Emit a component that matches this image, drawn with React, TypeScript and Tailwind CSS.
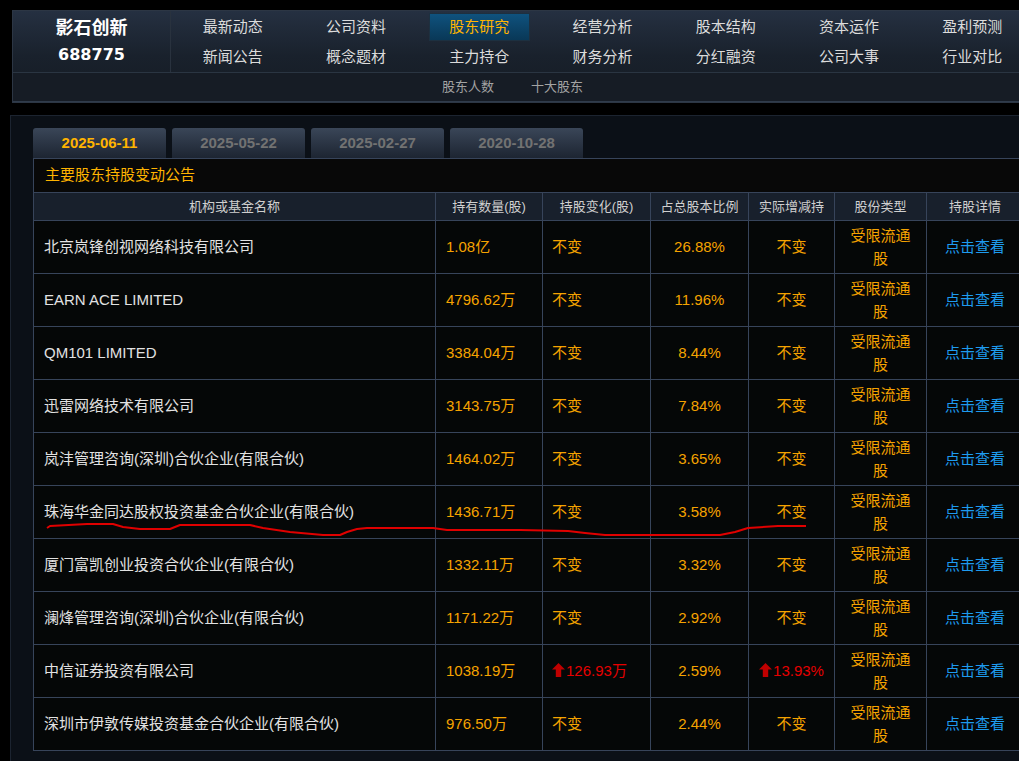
import React from 'react';

type Row = {
  name: string;
  count: string;
  change: string;
  pct: string;
  actual: string;
  up?: boolean;
};

const rows: Row[] = [
  { name: '北京岚锋创视网络科技有限公司', count: '1.08亿', change: '不变', pct: '26.88%', actual: '不变' },
  { name: 'EARN ACE LIMITED', count: '4796.62万', change: '不变', pct: '11.96%', actual: '不变' },
  { name: 'QM101 LIMITED', count: '3384.04万', change: '不变', pct: '8.44%', actual: '不变' },
  { name: '迅雷网络技术有限公司', count: '3143.75万', change: '不变', pct: '7.84%', actual: '不变' },
  { name: '岚沣管理咨询(深圳)合伙企业(有限合伙)', count: '1464.02万', change: '不变', pct: '3.65%', actual: '不变' },
  { name: '珠海华金同达股权投资基金合伙企业(有限合伙)', count: '1436.71万', change: '不变', pct: '3.58%', actual: '不变' },
  { name: '厦门富凯创业投资合伙企业(有限合伙)', count: '1332.11万', change: '不变', pct: '3.32%', actual: '不变' },
  { name: '澜烽管理咨询(深圳)合伙企业(有限合伙)', count: '1171.22万', change: '不变', pct: '2.92%', actual: '不变' },
  { name: '中信证券投资有限公司', count: '1038.19万', change: '126.93万', pct: '2.59%', actual: '13.93%', up: true },
  { name: '深圳市伊敦传媒投资基金合伙企业(有限合伙)', count: '976.50万', change: '不变', pct: '2.44%', actual: '不变' },
];

const navTop = ['最新动态', '公司资料', '股东研究', '经营分析', '股本结构', '资本运作', '盈利预测'];
const navBottom = ['新闻公告', '概念题材', '主力持仓', '财务分析', '分红融资', '公司大事', '行业对比'];
const tabs = ['2025-06-11', '2025-05-22', '2025-02-27', '2020-10-28'];

function UpArrow() {
  return (
    <svg width="13" height="14" viewBox="0 0 13 14" className="inline-block mr-[1px] -mt-[3px] align-middle">
      <polygon points="6.5,0 13,6.5 9.2,6.5 9.2,14 3.8,14 3.8,6.5 0,6.5" fill="#c00000" />
    </svg>
  );
}

export default function App() {
  return (
    <div className="relative w-[1019px] h-[761px] overflow-hidden bg-black font-['Liberation_Sans','Noto_Sans_CJK_SC',sans-serif]">
      {/* Header */}
      <div className="ml-[12px] mt-[10px] w-[1030px] h-[93px] border border-[#2c3644] bg-gradient-to-b from-[#253041] via-[#19212c] to-[#151b23]">
        <div className="flex h-[61px]">
          <div className="w-[158px] shrink-0 border-r border-[#29323e] flex flex-col items-center pt-[4px]">
            <div className="text-[18px] leading-[26px] font-bold text-white">影石创新</div>
            <div className="text-[16px] leading-[28px] font-bold text-white font-['DejaVu_Sans',sans-serif]">688775</div>
          </div>
          <div className="w-[863px] grid grid-cols-7 grid-rows-2 pt-[2px] gap-y-[1px] text-[15px] text-[#dcdcdc]">
            {navTop.map((t) => (
              <div key={t} className="h-[28px] flex items-center justify-center">
                {t === '股东研究' ? (
                  <span className="w-[101px] h-[28px] flex items-center justify-center border border-[#1d3040] bg-gradient-to-b from-[#0f527e] to-[#093857] text-[#ffb400]">
                    {t}
                  </span>
                ) : (
                  t
                )}
              </div>
            ))}
            {navBottom.map((t) => (
              <div key={t} className="h-[28px] flex items-center justify-center">
                {t}
              </div>
            ))}
          </div>
        </div>
        <div className="h-[30px] border-t border-[#2a3542] border-b border-b-[#2f3b4b] bg-[#161c25] flex items-center pl-[429px] gap-[37px] text-[13px] text-[#a3a3a3]">
          <span>股东人数</span>
          <span>十大股东</span>
        </div>
      </div>

      {/* Main panel */}
      <div className="ml-[10px] mt-[12px] w-[1020px] h-[700px] bg-[#0b1017] border-l border-t border-[#1c2430] pl-[22px] pt-[12px]">
        <div className="flex gap-[6px]">
          {tabs.map((t, i) => (
            <div
              key={t}
              className={
                'w-[133px] h-[30px] rounded-t-[3px] bg-gradient-to-b from-[#3a4658] to-[#1d2532] flex items-center justify-center text-[15px] font-bold ' +
                (i === 0 ? 'text-[#ffb400]' : 'text-[#727272]')
              }
            >
              {t}
            </div>
          ))}
        </div>

        <div className="w-[990px] border-l border-[#37445a]">
          <div className="h-[34px] border-t border-[#37445a] bg-[#080808] flex items-center pl-[11px] text-[15px] text-[#ffb400]">
            主要股东持股变动公告
          </div>
          <table className="table-fixed border-collapse w-[990px] -ml-px">
            <colgroup>
              <col className="w-[402px]" />
              <col className="w-[107px]" />
              <col className="w-[108px]" />
              <col className="w-[98px]" />
              <col className="w-[86px]" />
              <col className="w-[92px]" />
              <col className="w-[97px]" />
            </colgroup>
            <thead>
              <tr className="h-[28px] bg-[#18202c] text-[13px] text-[#cfcfcf]">
                {['机构或基金名称', '持有数量(股)', '持股变化(股)', '占总股本比例', '实际增减持', '股份类型', '持股详情'].map((h) => (
                  <th key={h} className="border border-[#37445a] font-normal p-0 text-center whitespace-nowrap overflow-hidden">
                    {h}
                  </th>
                ))}
              </tr>
            </thead>
            <tbody className="text-[15px]">
              {rows.map((r) => (
                <tr key={r.name} className="h-[53px] bg-[#050707]">
                  <td className="border border-[#37445a] pl-[10px] text-[#e2e2e2] whitespace-nowrap">{r.name}</td>
                  <td className="border border-[#37445a] pl-[10px] text-[#f5a300] whitespace-nowrap">{r.count}</td>
                  <td className={'border border-[#37445a] pl-[9px] whitespace-nowrap ' + (r.up ? 'text-[#e60000]' : 'text-[#f5a300]')}>
                    {r.up && <UpArrow />}
                    {r.change}
                  </td>
                  <td className="border border-[#37445a] text-center text-[#f5a300]">{r.pct}</td>
                  <td className={'border border-[#37445a] text-center whitespace-nowrap ' + (r.up ? 'text-[#e60000]' : 'text-[#f5a300]')}>
                    {r.up && <UpArrow />}
                    {r.actual}
                  </td>
                  <td className="border border-[#37445a] text-center text-[#f5a300] leading-[23px]">
                    <span className="inline-block w-[62px]">受限流通股</span>
                  </td>
                  <td className="border border-[#37445a] text-center text-[#1e9bef] whitespace-nowrap">点击查看</td>
                </tr>
              ))}
            </tbody>
          </table>
        </div>
      </div>

      {/* hand-drawn red annotation */}
      <svg className="absolute left-0 top-0 pointer-events-none" width="1019" height="761">
        <polyline
          fill="none"
          stroke="#e00000"
          strokeWidth="2"
          strokeLinejoin="round"
          points="47,528 50,526 87,524 113,524 123,527 140,529 170,529 180,525 250,525 263,528 290,532 323,535 340,535 347,532 357,529 367,528 433,528 447,530 520,530 568,531 585,533 605,535 720,535 735,532 748,528 778,526 806,526"
        />
      </svg>
    </div>
  );
}
